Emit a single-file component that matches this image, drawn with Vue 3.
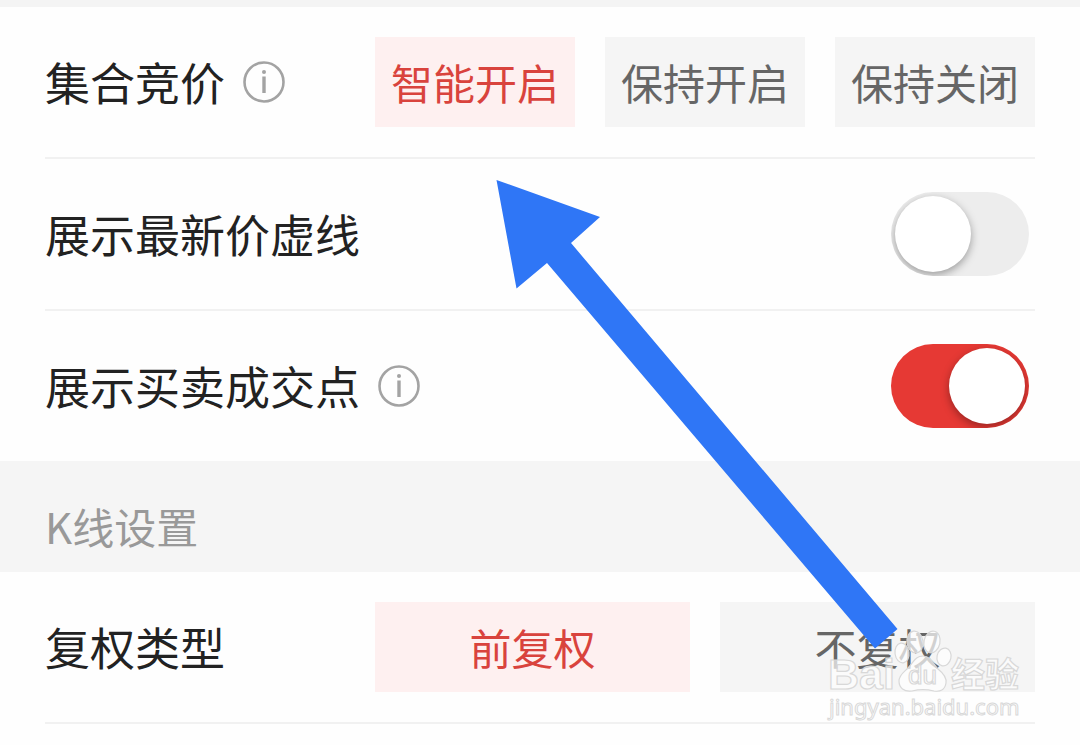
<script setup>
import { ref } from 'vue'

const auction = ref('智能开启')
const auctionOptions = ['智能开启', '保持开启', '保持关闭']
const adjust = ref('前复权')
const adjustOptions = ['前复权', '不复权']
const showLatest = ref(false)
const showTrades = ref(true)
</script>

<template>
  <main class="page">
    <section class="group">
      <div class="row split">
        <div class="title">
          <span id="auction-label">集合竞价</span>
          <button class="info" type="button" aria-label="集合竞价说明">
            <svg viewBox="0 0 42 42" aria-hidden="true">
              <circle class="ring" cx="21" cy="21" r="19.5" />
              <circle class="dot" cx="21" cy="11" r="2" />
              <path class="stem" d="M21 15.5V32" />
            </svg>
          </button>
        </div>
        <div class="segments" role="group" aria-labelledby="auction-label">
          <button
            v-for="o in auctionOptions" :key="o" type="button"
            class="segment" :class="{ active: auction === o }"
            :aria-pressed="auction === o" @click="auction = o"
          >{{ o }}</button>
        </div>
      </div>
      <div class="row">
        <label class="title" for="latest">展示最新价虚线</label>
        <input id="latest" v-model="showLatest" class="switch" type="checkbox">
      </div>
      <div class="row">
        <div class="title">
          <label for="trades">展示买卖成交点</label>
          <button class="info" type="button" aria-label="展示买卖成交点说明">
            <svg viewBox="0 0 42 42" aria-hidden="true">
              <circle class="ring" cx="21" cy="21" r="19.5" />
              <circle class="dot" cx="21" cy="11" r="2" />
              <path class="stem" d="M21 15.5V32" />
            </svg>
          </button>
        </div>
        <input id="trades" v-model="showTrades" class="switch" type="checkbox">
      </div>
    </section>

    <h2 class="heading">K线设置</h2>

    <section class="group">
      <div class="row split lined">
        <div id="adjust-label" class="title">复权类型</div>
        <div class="segments" role="group" aria-labelledby="adjust-label">
          <button
            v-for="o in adjustOptions" :key="o" type="button"
            class="segment" :class="{ active: adjust === o }"
            :aria-pressed="adjust === o" @click="adjust = o"
          >{{ o }}</button>
        </div>
      </div>
    </section>

    <svg class="overlay" viewBox="0 0 1080 745" aria-hidden="true">
      <path class="arrow" d="M496.5 180L600 217L571 243L897.5 629L875 648.5L547 263L516.5 288.5Z" />
      <g class="mark">
        <ellipse cx="902" cy="653" rx="7" ry="10" transform="rotate(-8 902 653)" />
        <ellipse cx="915" cy="642" rx="8" ry="11" transform="rotate(-8 915 642)" />
        <ellipse cx="932" cy="642" rx="8" ry="11" transform="rotate(12 932 642)" />
        <ellipse cx="944" cy="657" rx="7" ry="9" transform="rotate(12 944 657)" />
        <path d="M923 656C931 656 933 664 938 669C943 673 947 677 946 683C945 690 940 692 934 691C926 689 920 689 912 691C904 692 899 688 899 681C899 675 904 672 908 668C914 662 915 656 923 656Z" />
        <text class="bai" x="828" y="689">Bai</text>
        <text class="du" x="908" y="684">du</text>
        <text class="cn" x="951" y="687">经验</text>
        <text class="url" x="829" y="715">jingyan.baidu.com</text>
      </g>
    </svg>
  </main>
</template>

<style>
body {
  margin: 0;
  background: #fefefe;
}
</style>

<style scoped>
.page {
  position: relative;
  border-top: 7px solid #f4f4f4;
  font-family: "Noto Sans CJK SC", sans-serif;
  color: #222;
}
.group {
  padding: 0 45px;
}
.row {
  display: flex;
  align-items: center;
  justify-content: space-between;
  min-height: 150px;
  border-bottom: 2px solid #f1f1f1;
}
.row:last-child:not(.lined) {
  border-bottom: 0;
}
.split {
  display: grid;
  grid-template-columns: 1fr 2fr;
}
.title {
  display: flex;
  align-items: center;
  gap: 18px;
  font-size: 45px;
  line-height: 60px;
  white-space: nowrap;
}
.info {
  width: 42px;
  height: 42px;
  padding: 0;
  border: 0;
  background: none;
}
.info svg {
  display: block;
}
.ring {
  fill: none;
  stroke: #a3a3a3;
  stroke-width: 2.6;
}
.dot {
  fill: #a3a3a3;
}
.stem {
  stroke: #a3a3a3;
  stroke-width: 3.4;
}
.segments {
  display: flex;
  gap: 30px;
}
.segment {
  flex: 1;
  height: 90px;
  padding: 0;
  border: 0;
  background: #f5f5f5;
  color: #666;
  font-family: inherit;
  font-size: 42px;
  line-height: 60px;
  white-space: nowrap;
}
.segment.active {
  background: #fef0f0;
  color: #d9433d;
}
.switch {
  appearance: none;
  box-sizing: border-box;
  display: flex;
  width: 138px;
  height: 84px;
  margin: 0 6px 0 0;
  padding: 4px;
  border-radius: 42px;
  background: #ededed;
  overflow: hidden;
}
.switch::before {
  content: "";
  width: 76px;
  height: 76px;
  border-radius: 50%;
  background: #fff;
  box-shadow: 0 3px 9px rgba(0, 0, 0, 0.35);
}
.switch:checked {
  justify-content: flex-end;
  background: #e63934;
}
.heading {
  margin: 0;
  padding: 35px 45px 16px;
  background: #f5f5f5;
  color: #999;
  font-size: 42px;
  font-weight: 400;
  line-height: 60px;
}
.overlay {
  position: absolute;
  top: -7px;
  left: 0;
  width: 100%;
  pointer-events: none;
}
.arrow {
  fill: #2f76f6;
}
.mark {
  fill: #fff;
  fill-opacity: 0.7;
  stroke: #d8d8d8;
  stroke-width: 1.2;
}
.bai {
  font: bold 43px "Liberation Sans", sans-serif;
}
.du {
  font: 26px "Liberation Sans", sans-serif;
}
.cn {
  font: bold 34px "Noto Sans CJK SC", sans-serif;
}
.url {
  font: 22px "Noto Sans", sans-serif;
  stroke-width: 1;
}
</style>
